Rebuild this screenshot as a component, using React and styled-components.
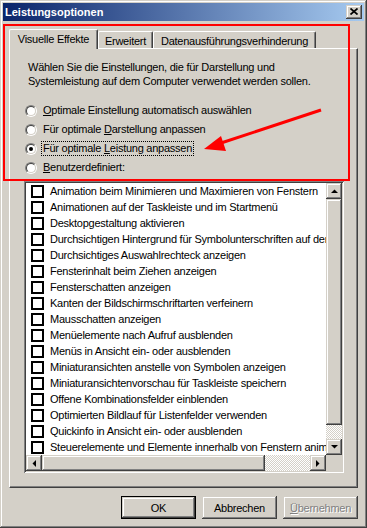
import React from "react";
import styled, { createGlobalStyle, css } from "styled-components";

const FACE = "#D4D0C8";
const SHADOW = "#808080";
const DARK = "#404040";

const GlobalStyle = createGlobalStyle`
  html, body {
    margin: 0;
    padding: 0;
    background: ${FACE};
  }
  * {
    box-sizing: border-box;
  }
`;

const raised = css`
  background: ${FACE};
  box-shadow: inset -1px -1px ${DARK}, inset 1px 1px ${FACE},
    inset -2px -2px ${SHADOW}, inset 2px 2px #fff;
`;

const Window = styled.div`
  position: relative;
  width: 367px;
  height: 528px;
  padding: 3px;
  display: flex;
  flex-direction: column;
  background: ${FACE};
  box-shadow: inset -1px -1px ${DARK}, inset 1px 1px ${FACE},
    inset -2px -2px ${SHADOW}, inset 2px 2px #fff;
  font-family: "Liberation Sans", Arial, sans-serif;
  font-size: 11px;
  letter-spacing: -0.25px;
  color: #000;
`;

const TitleBar = styled.div`
  height: 18px;
  display: flex;
  align-items: center;
  justify-content: space-between;
  padding: 0 2px 0 2px;
  background: linear-gradient(to right, #0a246a, #a6caf0);
`;

const Title = styled.span`
  color: #fff;
  font-weight: bold;
  font-size: 11px;
  letter-spacing: 0;
`;

const CloseButton = styled.div`
  ${raised};
  width: 16px;
  height: 14px;
  display: flex;
  align-items: center;
  justify-content: center;
  padding-bottom: 1px;
`;

const Body = styled.div`
  flex: 1;
  display: flex;
  flex-direction: column;
  padding: 8px 6px 6px 6px;
`;

const TabStrip = styled.div`
  height: 19px;
  display: flex;
  align-items: flex-end;
  position: relative;
  z-index: 1;
`;

const Tab = styled.div`
  width: ${(p) => p.$w}px;
  height: ${(p) => (p.$active ? 20 : 17)}px;
  margin-bottom: ${(p) => (p.$active ? -1 : 0)}px;
  padding-top: 3px;
  text-align: center;
  line-height: 13px;
  white-space: nowrap;
  background: ${FACE};
  border-top: 1px solid #fff;
  border-left: 1px solid #fff;
  border-right: 1px solid ${DARK};
  border-radius: 2px 2px 0 0;
  box-shadow: inset -1px 0 ${SHADOW};
`;

const Panel = styled.div`
  height: 440px;
  padding: 11px 13px 0 14px;
  border-top: 1px solid #fff;
  border-left: 1px solid #fff;
  border-right: 1px solid ${DARK};
  border-bottom: 1px solid ${DARK};
  box-shadow: inset -1px -1px ${SHADOW};
  display: flex;
  flex-direction: column;
`;

const Description = styled.p`
  margin: 0 0 0 4px;
  line-height: 14px;
`;

const RadioGroup = styled.div`
  margin-top: 13px;
  display: flex;
  flex-direction: column;
`;

const RadioRow = styled.div`
  height: 19px;
  display: flex;
  align-items: center;
  padding-left: 1px;
`;

const RadioCircle = styled.span`
  width: 12px;
  height: 12px;
  border-radius: 50%;
  border: 1px solid;
  border-color: ${SHADOW} #fff #fff ${SHADOW};
  display: flex;
  flex-shrink: 0;
`;

const RadioInner = styled.span`
  flex: 1;
  border-radius: 50%;
  border: 1px solid;
  border-color: ${DARK} ${FACE} ${FACE} ${DARK};
  background: #fff;
  display: flex;
  align-items: center;
  justify-content: center;
  &::after {
    content: "";
    width: 4px;
    height: 4px;
    border-radius: 50%;
    background: ${(p) => (p.$checked ? "#000" : "transparent")};
  }
`;

const RadioLabel = styled.span`
  margin-left: 4px;
  padding: 0 1px;
  line-height: 13px;
  border: 1px dotted ${(p) => (p.$focus ? "#000" : "transparent")};
`;

const ListBox = styled.div`
  margin-top: 4px;
  width: 320px;
  height: 292px;
  padding: 2px;
  background: #fff;
  box-shadow: inset 1px 1px ${SHADOW}, inset -1px -1px #fff,
    inset 2px 2px ${DARK}, inset -2px -2px ${FACE};
  display: grid;
  grid-template-columns: 300px 16px;
  grid-template-rows: 272px 16px;
`;

const Items = styled.div`
  overflow: hidden;
  display: flex;
  flex-direction: column;
`;

const Item = styled.div`
  height: 16px;
  flex-shrink: 0;
  display: flex;
  align-items: center;
  padding-left: 5px;
  white-space: nowrap;
`;

const CheckBox = styled.span`
  width: 13px;
  height: 13px;
  border: 2px solid #000;
  background: #fff;
  flex-shrink: 0;
  margin-right: 6px;
`;

const VScroll = styled.div`
  display: flex;
  flex-direction: column;
`;

const HScroll = styled.div`
  display: flex;
`;

const ScrollButton = styled.div`
  ${raised};
  width: 16px;
  height: 16px;
  flex-shrink: 0;
  display: flex;
  align-items: center;
  justify-content: center;
`;

const Thumb = styled.div`
  ${raised};
  flex: 0 0 ${(p) => p.$size}px;
`;

const Track = styled.div`
  flex: 1;
  background-color: #fff;
  background-image: conic-gradient(
    ${FACE} 25%,
    #fff 0 50%,
    ${FACE} 0 75%,
    #fff 0
  );
  background-size: 2px 2px;
`;

const Corner = styled.div`
  background: ${FACE};
`;

const ButtonRow = styled.div`
  margin-top: 8px;
  display: flex;
  justify-content: flex-end;
  gap: 6px;
`;

const Button = styled.div`
  ${raised};
  width: 75px;
  height: 23px;
  display: flex;
  align-items: center;
  justify-content: center;
  ${(p) =>
    p.$default &&
    css`
      border: 1px solid #000;
    `}
  ${(p) =>
    p.$disabled &&
    css`
      color: ${SHADOW};
      text-shadow: 1px 1px #fff;
    `}
`;

const Annotation = styled.div`
  position: absolute;
  left: 3px;
  top: 24px;
  width: 347px;
  height: 157px;
  border: 2px solid #ff0000;
  pointer-events: none;
  z-index: 5;
`;

const ArrowLayer = styled.svg`
  position: absolute;
  left: 0;
  top: 0;
  pointer-events: none;
  z-index: 5;
`;

const U = styled.span`
  text-decoration: underline;
  text-underline-offset: 1px;
`;

const items = [
  "Animation beim Minimieren und Maximieren von Fenstern",
  "Animationen auf der Taskleiste und im Startmenü",
  "Desktopgestaltung aktivieren",
  "Durchsichtigen Hintergrund für Symbolunterschriften auf dem Desktop verwenden",
  "Durchsichtiges Auswahlrechteck anzeigen",
  "Fensterinhalt beim Ziehen anzeigen",
  "Fensterschatten anzeigen",
  "Kanten der Bildschirmschriftarten verfeinern",
  "Mausschatten anzeigen",
  "Menüelemente nach Aufruf ausblenden",
  "Menüs in Ansicht ein- oder ausblenden",
  "Miniaturansichten anstelle von Symbolen anzeigen",
  "Miniaturansichtenvorschau für Taskleiste speichern",
  "Offene Kombinationsfelder einblenden",
  "Optimierten Bildlauf für Listenfelder verwenden",
  "Quickinfo in Ansicht ein- oder ausblenden",
  "Steuerelemente und Elemente innerhalb von Fenstern animieren",
];

const radios = [
  { pre: "", key: "O", post: "ptimale Einstellung automatisch auswählen" },
  { pre: "Für optimale ", key: "D", post: "arstellung anpassen" },
  { pre: "Für optimale ", key: "L", post: "eistung anpassen", checked: true },
  { pre: "", key: "B", post: "enutzerdefiniert:" },
];

const Arrow = ({ dir }) => {
  const shapes = {
    up: "0,4 7,4 3.5,0.5",
    down: "0,0 7,0 3.5,3.5",
    left: "4,0 4,7 0.5,3.5",
    right: "0,0 0,7 3.5,3.5",
  };
  const vertical = dir === "up" || dir === "down";
  return (
    <svg width={vertical ? 7 : 4} height={vertical ? 4 : 7}>
      <polygon points={shapes[dir]} fill="#000" />
    </svg>
  );
};

export default function App() {
  return (
    <>
      <GlobalStyle />
      <Window>
        <TitleBar>
          <Title>Leistungsoptionen</Title>
          <CloseButton>
            <svg width="8" height="7" viewBox="0 0 8 7">
              <path d="M0.5 0.5 L7.5 6.5 M7.5 0.5 L0.5 6.5" stroke="#000" strokeWidth="1.7" />
            </svg>
          </CloseButton>
        </TitleBar>

        <Body>
          <TabStrip>
            <Tab $active $w={89}>Visuelle Effekte</Tab>
            <Tab $w={55}>Erweitert</Tab>
            <Tab $w={163}>Datenausführungsverhinderung</Tab>
          </TabStrip>

          <Panel>
            <Description>
              Wählen Sie die Einstellungen, die für Darstellung und
              <br />
              Systemleistung auf dem Computer verwendet werden sollen.
            </Description>

            <RadioGroup>
              {radios.map((r, i) => (
                <RadioRow key={i}>
                  <RadioCircle>
                    <RadioInner $checked={r.checked} />
                  </RadioCircle>
                  <RadioLabel $focus={r.checked}>
                    {r.pre}
                    <U>{r.key}</U>
                    {r.post}
                  </RadioLabel>
                </RadioRow>
              ))}
            </RadioGroup>

            <ListBox>
              <Items>
                {items.map((text) => (
                  <Item key={text}>
                    <CheckBox />
                    {text}
                  </Item>
                ))}
              </Items>
              <VScroll>
                <ScrollButton>
                  <Arrow dir="up" />
                </ScrollButton>
                <Thumb $size={226} />
                <Track />
                <ScrollButton>
                  <Arrow dir="down" />
                </ScrollButton>
              </VScroll>
              <HScroll>
                <ScrollButton>
                  <Arrow dir="left" />
                </ScrollButton>
                <Thumb $size={223} />
                <Track />
                <ScrollButton>
                  <Arrow dir="right" />
                </ScrollButton>
              </HScroll>
              <Corner />
            </ListBox>
          </Panel>

          <ButtonRow>
            <Button $default>OK</Button>
            <Button>Abbrechen</Button>
            <Button $disabled>
              <U>Ü</U>bernehmen
            </Button>
          </ButtonRow>
        </Body>

        <Annotation />
        <ArrowLayer width="367" height="528">
          <line x1="321" y1="110" x2="218" y2="144" stroke="#ff0000" strokeWidth="3" />
          <polygon points="204,149 221,136 226,151" fill="#ff0000" />
        </ArrowLayer>
      </Window>
    </>
  );
}
